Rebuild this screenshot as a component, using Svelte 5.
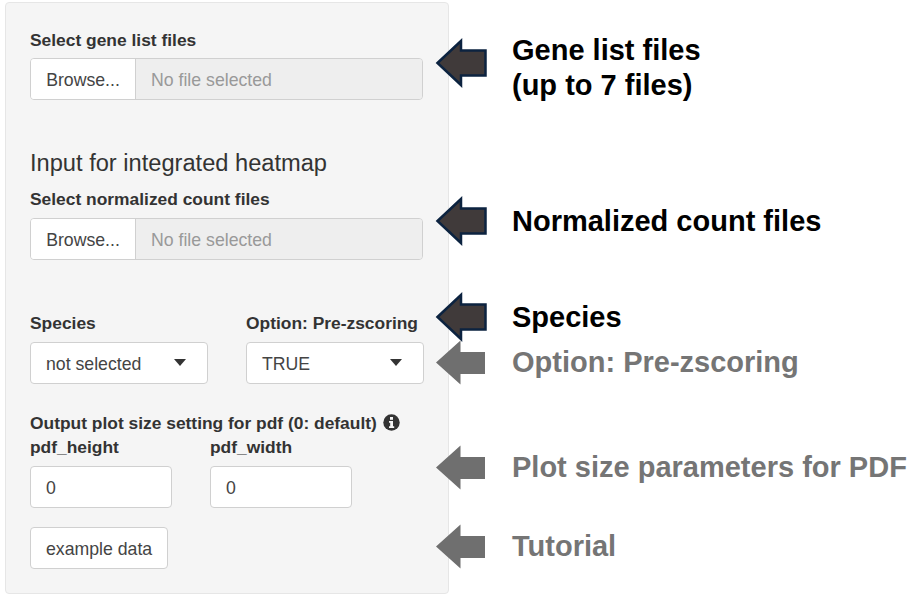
<script>
  const callouts = [
    { lines: ['Gene list files', '(up to 7 files)'], dark: true, cls: 'c1' },
    { lines: ['Normalized count files'], dark: true, cls: 'c2' },
    { lines: ['Species'], dark: true, cls: 'c3' },
    { lines: ['Option: Pre-zscoring'], dark: false, cls: 'c4' },
    { lines: ['Plot size parameters for PDF'], dark: false, cls: 'c5' },
    { lines: ['Tutorial'], dark: false, cls: 'c6' }
  ];
</script>

{#snippet fileInput()}
  <div class="file">
    <span class="browse">Browse...</span>
    <span class="nofile">No file selected</span>
  </div>
{/snippet}

{#snippet caret()}
  <svg class="caret" width="12" height="7" viewBox="0 0 12 7"><path d="M0 0h12L6 7z" fill="#333" /></svg>
{/snippet}

<div class="page">
  <section class="panel">
    <div class="label first">Select gene list files</div>
    {@render fileInput()}
    <h4>Input for integrated heatmap</h4>
    <div class="label tight">Select normalized count files</div>
    {@render fileInput()}
    <div class="selects">
      <div class="col">
        <div class="label">Species</div>
        <div class="control select">not selected {@render caret()}</div>
      </div>
      <div class="col">
        <div class="label">Option: Pre-zscoring</div>
        <div class="control select">TRUE {@render caret()}</div>
      </div>
    </div>
    <div class="label output">Output plot size setting for pdf (0: default)
      <svg class="info" width="17" height="17" viewBox="0 0 17 17">
        <circle cx="8.500" cy="8.500" r="8.200" fill="#333" />
        <rect x="7" y="3" width="3" height="2.800" fill="#f5f5f5" />
        <path d="M6 7h4v5.200h1.200V14H6v-1.800h1.200V8.800H6z" fill="#f5f5f5" />
      </svg>
    </div>
    <div class="sizes">
      <div class="size">
        <div class="label">pdf_height</div>
        <div class="control">0</div>
      </div>
      <div class="size">
        <div class="label">pdf_width</div>
        <div class="control">0</div>
      </div>
    </div>
    <div class="control example">example data</div>
  </section>

  <aside class="callouts">
    {#each callouts as c}
      <div class="callout {c.cls}" class:dark={c.dark}>
        <svg class="arrow" width="52" height="52" viewBox="0 0 52 52">
          {#if c.dark}
            <path d="M2.500 26 26 4V13.500H50.500V38.500H26V48z" fill="#403a3a" stroke="#0c2340" stroke-width="2.500" />
          {:else}
            <path d="M1 26.500 25.500 4.500V16H50V38H25.500V48.500z" fill="#6f6f6f" />
          {/if}
        </svg>
        <div class="text">
          {#each c.lines as line}<div>{line}</div>{/each}
        </div>
      </div>
    {/each}
  </aside>
</div>

<style>
  :global(body) {
    margin: 0;
    background: #fff;
    font-family: "Liberation Sans", Arial, sans-serif;
    color: #333;
  }
  .page {
    display: flex;
    width: 909px;
    height: 600px;
    padding: 2px 0 0 5px;
    box-sizing: border-box;
    overflow: hidden;
  }
  .panel {
    width: 444px;
    height: 592px;
    box-sizing: border-box;
    padding: 28px 20px 0 24px;
    background: #f5f5f5;
    border: 1px solid #e6e6e6;
    border-radius: 4px;
    flex: none;
  }
  .label {
    font-size: 17.400px;
    font-weight: 700;
    line-height: 18px;
    height: 20px;
    white-space: nowrap;
  }
  .first { margin-bottom: 7px; }
  .tight { margin-bottom: 8px; }
  .file {
    display: flex;
    width: 393px;
    height: 42px;
    box-sizing: border-box;
    border: 1px solid #d0d0d0;
    border-radius: 4px;
    font-size: 17.700px;
    overflow: hidden;
  }
  .browse {
    width: 105px;
    box-sizing: border-box;
    padding-top: 2px;
    background: #fff;
    border-right: 1px solid #d0d0d0;
    display: flex;
    align-items: center;
    justify-content: center;
    color: #444;
  }
  .nofile {
    flex: 1;
    background: #eee;
    color: #999;
    display: flex;
    align-items: center;
    padding: 2px 0 0 15px;
  }
  h4 {
    margin: 50px 0 14px;
    font-size: 23.650px;
    font-weight: 400;
    line-height: 26px;
    height: 26px;
  }
  .selects {
    display: flex;
    gap: 38px;
    margin-top: 54px;
  }
  .col { width: 178px; flex: none; }
  .col .label { margin-bottom: 8px; }
  .control {
    height: 42px;
    box-sizing: border-box;
    background: #fff;
    border: 1px solid #d0d0d0;
    border-radius: 4px;
    font-size: 17.700px;
    display: flex;
    align-items: center;
    padding: 2px 15px 0;
    color: #444;
  }
  .select { justify-content: space-between; }
  .caret { margin: -4px 6px 0 0; flex: none; }
  .output {
    margin-top: 29px;
    display: flex;
    align-items: center;
    gap: 6px;
  }
  .info { flex: none; margin-top: -1px; }
  .sizes {
    display: flex;
    gap: 38px;
    margin-top: 5px;
  }
  .size { width: 142px; }
  .size .label { margin-bottom: 8px; }
  .example {
    width: 138px;
    margin-top: 19px;
    white-space: nowrap;
  }
  .callouts {
    flex: 1;
    margin-left: -14px;
    display: flex;
    flex-direction: column;
  }
  .callout {
    display: flex;
    align-items: center;
    gap: 25px;
    height: 52px;
    flex: none;
    white-space: nowrap;
  }
  .arrow { flex: none; }
  .text {
    font-size: 29px;
    font-weight: 700;
    line-height: 35px;
    color: #757575;
  }
  .dark .text { color: #000; }
  .c1 { margin-top: 35px; }
  .c1 .text { margin-top: 10px; }
  .c2 { margin-top: 106px; }
  .c3 { margin-top: 44px; }
  .c4 { margin-top: -7px; }
  .c5 { margin-top: 53px; }
  .c6 { margin-top: 27px; }
</style>
